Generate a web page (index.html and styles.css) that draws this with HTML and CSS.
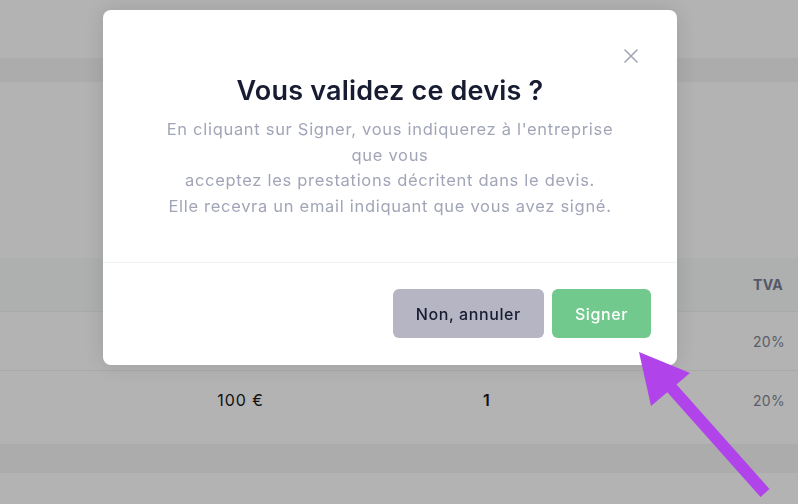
FILE: index.html
```html
<!doctype html>
<html lang="fr">
<head>
	<meta charset="utf-8">
	<title>Devis</title>
	<link rel="stylesheet" href="styles.css">
</head>
<body>
<div class="page">
	<div class="band band-top"></div>
	<div class="spacer"></div>
	<div class="table">
		<div class="row head">
			<span class="cell price"></span>
			<span class="cell qty"></span>
			<span class="cell tva">TVA</span>
		</div>
		<div class="row first">
			<span class="cell price"></span>
			<span class="cell qty"></span>
			<span class="cell tva light">20%</span>
		</div>
		<div class="row second">
			<span class="cell price">100 €</span>
			<span class="cell qty">1</span>
			<span class="cell tva light">20%</span>
		</div>
	</div>
	<div class="band band-bottom"></div>
</div>

<div class="modal">
	<div class="modal-top">
		<button class="close" aria-label="Fermer">
			<svg width="14" height="14" viewBox="0 0 14 14"><path d="M1 1L13 13M13 1L1 13" stroke="#a1a5b7" stroke-width="1.6" stroke-linecap="round"/></svg>
		</button>
	</div>
	<div class="modal-body">
		<h1>Vous validez ce devis ?</h1>
		<p>En cliquant sur Signer, vous indiquerez à l'entreprise<br>que vous<br>acceptez les prestations décritent dans le devis.<br>Elle recevra un email indiquant que vous avez signé.</p>
	</div>
	<div class="modal-foot">
		<button class="btn cancel">Non, annuler</button>
		<button class="btn sign">Signer</button>
	</div>
</div>

<svg class="arrow" width="798" height="504" viewBox="0 0 798 504">
	<line x1="765" y1="493" x2="668" y2="384" stroke="#b044ea" stroke-width="12"/>
	<polygon points="639,352 690,373 651,406" fill="#b044ea"/>
</svg>
</body>
</html>
```

FILE: styles.css
```css
html, body {
	margin: 0;
	height: 100%;
}
body {
	background: #b3b3b3;
	font-family: Inter, "Open Sans", sans-serif;
	overflow: hidden;
}
.page {
	padding-top: 58px;
}
.band {
	background: #acacad;
}
.band-top {
	height: 24px;
}
.spacer {
	height: 176px;
}
.row {
	display: flex;
	align-items: center;
	border-bottom: 1px solid #a9a9a9;
}
.row.head {
	height: 53px;
	background: #aeafaf;
}
.row.first {
	height: 58px;
}
.row.second {
	height: 58px;
	padding-bottom: 15px;
	border-bottom: 0;
}
.cell {
	font-size: 14px;
	letter-spacing: 0.3px;
}
.price {
	width: 264px;
	text-align: right;
	font-size: 16px;
	letter-spacing: 1px;
	color: #111;
}
.qty {
	width: 226px;
	text-align: right;
	font-size: 16px;
	font-weight: 600;
	color: #111;
}
.tva {
	margin-left: auto;
	width: 45px;
	text-align: left;
	font-weight: 700;
	color: #545867;
}
.tva.light {
	font-weight: 400;
	color: #5a5d6a;
}
.band-bottom {
	height: 29px;
}

.modal {
	position: fixed;
	top: 10px;
	left: 103px;
	width: 574px;
	background: #fff;
	border-radius: 8px;
	box-shadow: 0 0 20px rgba(0, 0, 0, 0.12);
}
.modal-top {
	display: flex;
	justify-content: flex-end;
	padding: 39px 39px 0;
}
.close {
	border: 0;
	background: none;
	padding: 0;
	width: 14px;
	height: 14px;
	display: flex;
}
.modal-body {
	text-align: center;
	padding: 0 20px 43px;
}
h1 {
	margin: 12px 0 10px;
	font-size: 27px;
	line-height: 32px;
	font-weight: 600;
	letter-spacing: 0.2px;
	color: #181c32;
}
p {
	margin: 0;
	font-size: 16.5px;
	line-height: 25.6px;
	letter-spacing: 0.7px;
	color: #a1a5b7;
}
.modal-foot {
	display: flex;
	justify-content: flex-end;
	gap: 8px;
	padding: 26px 26px 27px;
	border-top: 1px solid #eff2f5;
}
.btn {
	border: 0;
	border-radius: 6px;
	height: 49px;
	padding: 0 23px;
	font-family: inherit;
	font-size: 16px;
	font-weight: 500;
	letter-spacing: 0.6px;
}
.cancel {
	background: #b5b5c3;
	color: #181c32;
}
.sign {
	background: #72c98d;
	color: #fff;
}
.arrow {
	position: fixed;
	top: 0;
	left: 0;
	pointer-events: none;
}
```
